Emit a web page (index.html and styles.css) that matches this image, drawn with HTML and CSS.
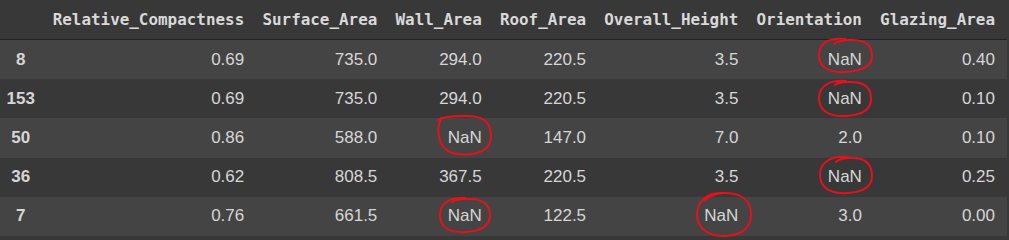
FILE: index.html
```html
<!DOCTYPE html>
<html>
<head>
<meta charset="utf-8">
<link rel="stylesheet" href="styles.css">
</head>
<body>
<div class="frame">
  <table class="df">
    <thead>
      <tr>
        <th class="idx"></th>
        <th>Relative_Compactness</th>
        <th>Surface_Area</th>
        <th>Wall_Area</th>
        <th>Roof_Area</th>
        <th>Overall_Height</th>
        <th>Orientation</th>
        <th class="last">Glazing_Area</th>
      </tr>
    </thead>
    <tbody>
      <tr class="odd">
        <th class="idx">8</th><td>0.69</td><td>735.0</td><td>294.0</td><td>220.5</td><td>3.5</td><td>NaN</td><td class="last">0.40</td>
      </tr>
      <tr class="even">
        <th class="idx">153</th><td>0.69</td><td>735.0</td><td>294.0</td><td>220.5</td><td>3.5</td><td>NaN</td><td class="last">0.10</td>
      </tr>
      <tr class="odd">
        <th class="idx">50</th><td>0.86</td><td>588.0</td><td>NaN</td><td>147.0</td><td>7.0</td><td>2.0</td><td class="last">0.10</td>
      </tr>
      <tr class="even">
        <th class="idx">36</th><td>0.62</td><td>808.5</td><td>367.5</td><td>220.5</td><td>3.5</td><td>NaN</td><td class="last">0.25</td>
      </tr>
      <tr class="odd">
        <th class="idx">7</th><td>0.76</td><td>661.5</td><td>NaN</td><td>122.5</td><td>NaN</td><td>3.0</td><td class="last">0.00</td>
      </tr>
    </tbody>
  </table>
  <svg class="marks" width="1009" height="240" viewBox="0 0 1009 240" fill="none" stroke="#e8101a" stroke-width="2" stroke-linecap="round">
    <path d="M845 39 C830 38, 819 42, 819 55 C819 68, 830 73, 846 72 C862 71, 872 66, 872 56 C872 45, 866 39, 848 40 C840 40.5, 836 42, 834 44"/>
    <path d="M846 81 C831 80, 819 85, 819 98 C819 111, 830 117, 846 116 C862 115, 871 110, 871 99 C871 87, 864 81, 848 82 C841 82, 837 83, 835 85"/>
    <path d="M441 118 C436 130, 437 152, 458 154 C478 156, 492 150, 491 135 C490 122, 484 116, 466 116 C452 116, 443 117, 438 120"/>
    <path d="M848 157 C832 156, 820 161, 820 175 C820 189, 832 194, 848 193 C863 192, 872 187, 872 176 C872 164, 865 157, 850 158 C843 158, 838 160, 836 162"/>
    <path d="M465 198 C450 197, 440 203, 440 215 C440 228, 450 233, 466 232 C482 231, 490 226, 490 215 C490 204, 482 198, 467 199 C460 199, 455 200, 452 202"/>
    <path d="M722 193 C706 192, 697 203, 697 215 C697 228, 709 237, 726 236 C742 235, 751 228, 751 214 C751 200, 741 193, 724 193 C716 193, 709 197, 705 200"/>
  </svg>
</div>
</body>
</html>
```

FILE: styles.css
```css
html, body {
  margin: 0;
  padding: 0;
  background: #383838;
}

.frame {
  position: relative;
  width: 1009px;
  height: 240px;
  overflow: hidden;
}

.df {
  border-collapse: collapse;
  border-spacing: 0;
}

.df thead th {
  height: 39px;
  padding: 0 9.1px;
  font-family: "DejaVu Sans Mono", "Liberation Mono", monospace;
  font-weight: bold;
  font-size: 15.92px;
  color: #d9d9d9;
  text-align: right;
  vertical-align: middle;
  white-space: nowrap;
  border-bottom: 1px solid #222222;
  background: #383838;
}

.df tbody td,
.df tbody th {
  height: 39.2px;
  padding: 0 9.1px;
  font-family: "Liberation Sans", Arial, sans-serif;
  font-size: 17px;
  color: #d6d6d6;
  text-align: right;
  vertical-align: middle;
  white-space: nowrap;
}

.df th.idx {
  width: 43.6px;
  min-width: 43.6px;
  box-sizing: border-box;
  padding: 0 2px 0 0;
  text-align: center;
}

.df tbody th.idx {
  font-weight: bold;
}

.df .last {
  padding-right: 12px;
}

.df tr.odd {
  background: #444444;
}

.df tr.even {
  background: #383838;
}

.marks {
  position: absolute;
  left: 0;
  top: 0;
  pointer-events: none;
}
```
